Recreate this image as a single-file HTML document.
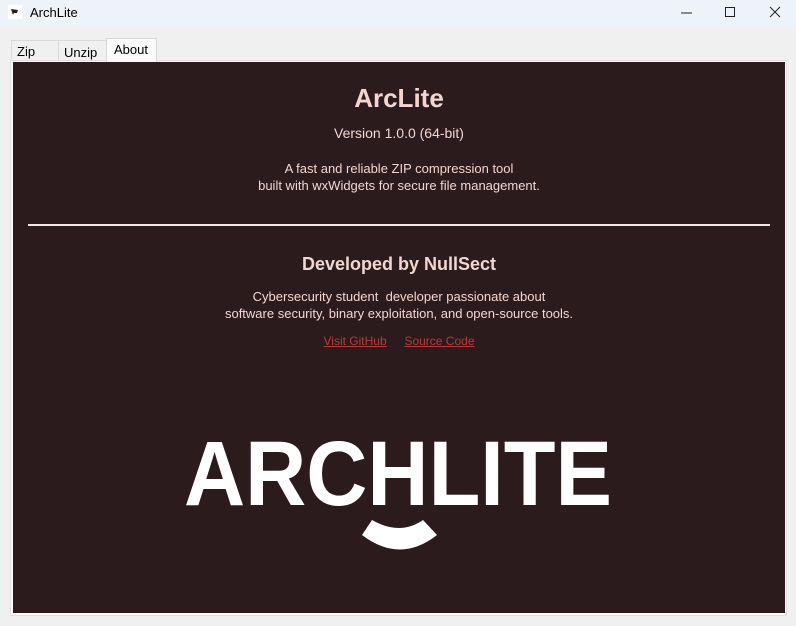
<!DOCTYPE html>
<html><head><style>
html,body{margin:0;padding:0;width:796px;height:626px;overflow:hidden;background:#f0f0f0;font-family:"Liberation Sans",sans-serif;}
.title{position:absolute;left:0;top:0;width:796px;height:27px;background:#eef2f9;}
.title .t{position:absolute;left:30px;top:5px;font-size:13px;color:#000;}
.icon{position:absolute;left:8px;top:5px;width:14px;height:14px;background:#fff;}
.tab{position:absolute;top:40px;height:21px;font-size:13px;color:#000;border:1px solid #d9d9d9;border-bottom:none;background:#f0f0f0;box-sizing:border-box;padding:3px 0 0 5px;}
.panel{position:absolute;left:13px;top:62px;width:772px;height:551px;background:#2b1b1c;color:#f3d6d0;text-align:center;}
.frame{position:absolute;left:10px;top:60px;width:777px;height:556px;background:#fafafa;border:1px solid #e0e0e0;box-sizing:border-box;}
.p{position:absolute;left:0;width:772px;text-align:center;}
a{color:#b83a3a;text-decoration:underline;font-size:12px;}
</style></head><body>
<div class="title"><div class="icon"><svg width="14" height="14"><path d="M3 4 L10 5 L9 8 L6 8 L5 10 Z" fill="#222"/></svg></div><div class="t">ArchLite</div>
<svg style="position:absolute;left:680px;top:6px" width="14" height="14"><path d="M1 7H12" stroke="#222" stroke-width="1"/></svg>
<svg style="position:absolute;left:724px;top:6px" width="14" height="14"><rect x="1.5" y="1.5" width="9" height="9" fill="none" stroke="#222" stroke-width="1"/></svg>
<svg style="position:absolute;left:769px;top:6px" width="14" height="14"><path d="M1 1L11 11M11 1L1 11" stroke="#222" stroke-width="1"/></svg>
</div>
<div class="tab" style="left:11px;width:48px">Zip</div>
<div class="tab" style="left:58px;width:49px;padding-top:4px">Unzip</div>
<div class="frame"></div>
<div class="tab" style="left:106px;width:51px;top:38px;height:24px;background:#fafafa;padding:3px 0 0 7px">About</div>
<div class="panel">
<div class="p" style="top:21px;font-size:26px;font-weight:bold;">ArcLite</div>
<div class="p" style="top:63px;font-size:14px;">Version 1.0.0 (64-bit)</div>
<div class="p" style="top:98px;font-size:13px;line-height:17px;">A fast and reliable ZIP compression tool<br>built with wxWidgets for secure file management.</div>
<div style="position:absolute;left:15px;top:162px;width:742px;height:2px;background:#f3e8e8;"></div>
<div class="p" style="top:192px;font-size:18px;font-weight:bold;">Developed by NullSect</div>
<div class="p" style="top:226px;font-size:13px;line-height:17px;">Cybersecurity student&nbsp; developer passionate about<br>software security, binary exploitation, and open-source tools.</div>
<div class="p" style="top:270px;"><a>Visit GitHub</a>&nbsp;&nbsp;&nbsp; <a>Source Code</a></div>
<svg style="position:absolute;left:0;top:0" width="772" height="551">
<text x="171" y="443" font-family="Liberation Sans" font-weight="bold" font-size="92" fill="#fff" textLength="428" lengthAdjust="spacingAndGlyphs">ARCHLITE</text>
<path d="M349 473 L359 458 Q387 474 410 458 L424 473 Q387 502 349 473 Z" fill="#fff"/>
</svg>
</div>
</body></html>
